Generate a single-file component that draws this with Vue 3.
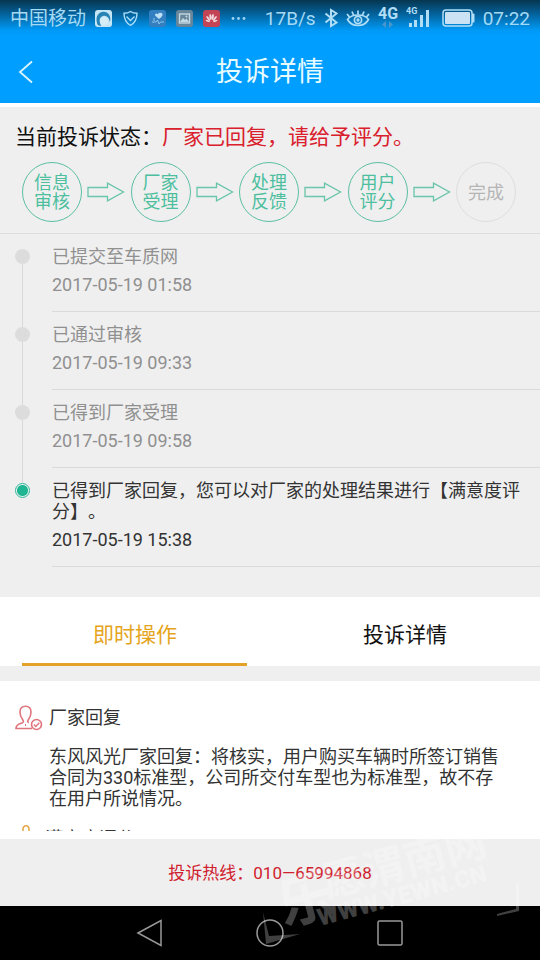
<script setup>
import { ref } from 'vue'

const steps = [
  { lines: ['信息', '审核'], done: true },
  { lines: ['厂家', '受理'], done: true },
  { lines: ['处理', '反馈'], done: true },
  { lines: ['用户', '评分'], done: true },
  { lines: ['完成'], done: false },
]

const records = [
  { text: '已提交至车质网', time: '2017-05-19 01:58' },
  { text: '已通过审核', time: '2017-05-19 09:33' },
  { text: '已得到厂家受理', time: '2017-05-19 09:58' },
  { text: '已得到厂家回复，您可以对厂家的处理结果进行【满意度评分】。', time: '2017-05-19 15:38' },
]

const tabs = ['即时操作', '投诉详情']
const active = ref(0)
</script>

<template>
  <div class="screen" lang="zh-CN">
    <header class="top">
      <div class="status-bar">
        <span class="carrier">中国移动</span>
        <div class="notices">
          <svg width="17" height="17" viewBox="0 0 17 17">
            <rect width="17" height="17" rx="3" fill="#c5e6f5" />
            <path d="M2 13C0 5 5 1 10 2c5 1 6 6 5 10-1-5-4-7-7-6-3 1-4 4-3 7l1 3C4 16 2 15 2 13z" fill="#2583b5" />
            <circle cx="9" cy="11" r="4" fill="#d5edf7" />
          </svg>
          <svg width="17" height="17" viewBox="0 0 17 17" fill="none" stroke="#a9dcfa" stroke-width="1.4">
            <path d="M8.500 1.500C6.500 3 4.500 3.300 2 3.300c0 6 1.500 9.500 6.500 12 5-2.500 6.500-6 6.500-12-2.500 0-4.500-.3-6.500-1.800z" />
            <path d="M4.500 6.500l4 4 4-4" />
          </svg>
          <svg width="17" height="17" viewBox="0 0 17 17">
            <rect width="17" height="17" rx="3" fill="#347fc0" />
            <path d="M10 9L6.500 6C5 4 7.500 2.500 9 4.300c1-2.300 5-1.800 4.500.7-.3 1.500-1.500 2.500-3.500 4z" fill="#bde0f5" />
            <path d="M3 12h4l1.500-2 1.500 4 1.500-2H15M5 8v3" stroke="#8dc5ea" fill="none" />
          </svg>
          <svg width="17" height="17" viewBox="0 0 17 17">
            <rect width="17" height="17" rx="3" fill="#68869a" />
            <rect x="3.500" y="4" width="10" height="9" fill="none" stroke="#c2d8e2" stroke-width="1.400" />
            <path d="M4 12l3-4 2 2 1.500-1.500L13 12z" fill="#c2d8e2" />
            <circle cx="10.500" cy="6.500" r="1" fill="#c2d8e2" />
          </svg>
          <svg width="17" height="17" viewBox="0 0 17 17">
            <rect width="17" height="17" rx="3" fill="#c34455" />
            <g fill="#f3dce0">
              <ellipse cx="7.500" cy="7" rx="1.100" ry="3" transform="rotate(-8 7.500 7)" />
              <ellipse cx="9.700" cy="7" rx="1.100" ry="3" transform="rotate(8 9.700 7)" />
              <ellipse cx="5.300" cy="8.500" rx="1" ry="3" transform="rotate(-38 5.300 8.500)" />
              <ellipse cx="11.800" cy="8.500" rx="1" ry="3" transform="rotate(38 11.800 8.500)" />
              <ellipse cx="4.700" cy="11" rx=".9" ry="2.200" transform="rotate(-72 4.700 11)" />
              <ellipse cx="12.300" cy="11" rx=".9" ry="2.200" transform="rotate(72 12.300 11)" />
            </g>
          </svg>
          <svg width="17" height="17" viewBox="0 0 17 17" fill="#9bd2f0">
            <circle cx="3" cy="8.500" r="1.400" /><circle cx="8.500" cy="8.500" r="1.400" /><circle cx="14" cy="8.500" r="1.400" />
          </svg>
        </div>
        <div class="signals">
          <span class="speed">17B/s</span>
          <svg width="14" height="20" viewBox="0 0 14 20" fill="none" stroke="#b0def7" stroke-width="2">
            <path d="M1.500 5.500l11 9L7 18v-16l5.500 3.500-11 9" />
          </svg>
          <svg width="24" height="20" viewBox="0 0 24 20" fill="none" stroke="#b0def7" stroke-width="1.700">
            <path d="M1.500 11.500C6 5.500 18 5.500 22.500 11.500 18 19.500 6 19.500 1.500 11.500z" />
            <circle cx="12" cy="12" r="3.600" /><circle cx="12" cy="12" r=".8" />
            <path d="M12 6.500V2.500M7.500 7L6 3.500M16.500 7L18 3.500M3.500 9L1 6M20.500 9L23 6" />
          </svg>
          <svg width="20" height="26" viewBox="0 0 20 26">
            <text x="0" y="14" class="net">4G</text>
            <path d="M4 19.500l4-3.500v7zM15 19.500L11 16v7z" fill="#4796cc" />
          </svg>
          <svg width="24" height="26" viewBox="0 0 24 26" fill="#b0def7">
            <text x="0" y="9" class="net-small">4G</text>
            <rect x="3" y="18" width="3" height="4" /><rect x="8" y="15" width="3" height="7" />
            <rect x="14" y="10" width="3" height="12" /><rect x="20" y="5" width="3" height="17" />
          </svg>
          <svg class="battery" width="33" height="18" viewBox="0 0 33 18">
            <rect x="1" y="1" width="29" height="16" rx="3" fill="none" stroke="#b0def7" stroke-width="1.500" />
            <rect x="3" y="3" width="25" height="12" rx="1" fill="#cbe2f5" />
            <path d="M30 4.500h1.500q1 0 1 1v7q0 1-1 1H30z" fill="#b0def7" />
          </svg>
          <span class="clock">07:22</span>
        </div>
      </div>
      <div class="title-bar">
        <button class="back" type="button" aria-label="返回">
          <svg width="16" height="24" viewBox="0 0 16 24" fill="none" stroke="#d8f5ff" stroke-width="1.800">
            <path d="M14 1.500L2 12l12 10.500" />
          </svg>
        </button>
        <h1>投诉详情</h1>
      </div>
    </header>

    <section class="progress">
      <p class="state">当前投诉状态：<strong>厂家已回复，请给予评分。</strong></p>
      <div class="steps">
        <template v-for="(step, i) in steps" :key="i">
          <svg v-if="i" width="38" height="20" viewBox="0 0 38 20" fill="none" stroke="#69c5ab" stroke-width="1.300">
            <path d="M1 5.500h19.500V1.200L36.500 10 20.500 18.800v-4.300H1z" />
          </svg>
          <div class="step" :class="{ pending: !step.done }">
            <span v-for="line in step.lines" :key="line">{{ line }}</span>
          </div>
        </template>
      </div>
    </section>

    <ol class="timeline">
      <li v-for="(record, i) in records" :key="record.time" :class="{ current: i === records.length - 1 }">
        <span class="rail"><i class="dot"></i></span>
        <div class="record">
          <p>{{ record.text }}</p>
          <time>{{ record.time }}</time>
        </div>
      </li>
    </ol>

    <nav class="tabs">
      <button v-for="(tab, i) in tabs" :key="tab" type="button" :class="{ active: active === i }" @click="active = i">
        {{ tab }}
      </button>
    </nav>

    <main class="panel">
      <div class="scroll">
        <article>
          <h2>
            <svg width="28" height="26" viewBox="0 0 28 26" fill="none" stroke="#e0737c" stroke-width="1.600">
              <path d="M17 23.500H1c0-4 3-4.500 6-5.500 1.800-.7 1.700-2.200.6-3.500C5.500 12 5 9.500 5 7c0-3.500 2.200-5.800 5.500-5.800S16 3.500 16 7c0 2.500-.5 5-2.500 7.500-1.200 1.500-1 2.600.3 3.300" />
              <path d="M10.500 19v2" stroke-width="1" />
              <circle cx="21.500" cy="19.500" r="5" />
              <path d="M18.800 19.500l2 2 3.500-3.700" stroke-width="1.400" />
            </svg>
            厂家回复
          </h2>
          <p>东风风光厂家回复：将核实，用户购买车辆时所签订销售合同为330标准型，公司所交付车型也为标准型，故不存在用户所说情况。</p>
        </article>
        <article>
          <h2 class="rating">
            <svg width="24" height="30" viewBox="0 0 24 30" fill="none" stroke="#e8a84c" stroke-width="1.600">
              <path d="M8 12V5.500C8 .5 14 .5 14 5.500V12h7l-2 16H6L4 14z" />
            </svg>
            满意度评分
          </h2>
        </article>
      </div>
    </main>

    <footer class="hotline"><a href="tel:01065994868">投诉热线：010—65994868</a></footer>

    <div class="system-nav">
      <button type="button" aria-label="后退">
        <svg width="28" height="28" viewBox="0 0 28 28"><path d="M2 14L25 1.500v25z" /></svg>
      </button>
      <button type="button" aria-label="主屏幕">
        <svg width="28" height="28" viewBox="0 0 28 28"><circle cx="14" cy="14" r="13" /></svg>
      </button>
      <button type="button" aria-label="最近任务">
        <svg width="28" height="28" viewBox="0 0 28 28"><rect x="2" y="2" width="24" height="24" rx="1.500" /></svg>
      </button>
    </div>

    <svg class="watermark" width="290" height="150" viewBox="0 -20 290 150" aria-hidden="true">
      <text transform="translate(34 96) rotate(-15)" class="mark-name"><tspan class="mark-initial">乐</tspan></text>
      <text transform="translate(77 68) rotate(-15)" class="mark-name">愿渭南网</text>
      <text transform="translate(70 96) rotate(-15)" class="mark-site">WWW.YEWN.CN</text>
      <path d="M13 82l6 24 31-2-34 10zM269 54v27l-22 5v-2l19-5V54z" />
    </svg>
  </div>
</template>

<style>
body {
  margin: 0;
  background: #efefef;
}
</style>

<style scoped>
.screen {
  position: relative;
  display: flex;
  flex-direction: column;
  height: 100vh;
  overflow: hidden;
  background: #efefef;
  color: #333;
  font-family: Roboto, "Noto Sans CJK SC", sans-serif;
  font-size: 18px;
  line-height: 21px;
  text-spacing-trim: space-all;
}
h1, h2, p, ol {
  margin: 0;
  padding: 0;
  font-weight: 400;
}
button {
  padding: 0;
  border: 0;
  background: none;
  color: inherit;
  font: inherit;
  cursor: pointer;
}
svg {
  display: block;
  flex: none;
}
.top {
  flex: none;
  border-bottom: 4px solid #fff;
  background: linear-gradient(#063650 0, #04629b 14px, #0099f5 30px, #009eff 36px);
}
.status-bar {
  display: flex;
  align-items: center;
  height: 36px;
  padding: 0 10px;
  color: #a5daf5;
  font-size: 19px;
}
.notices {
  display: flex;
  gap: 10px;
  margin-left: 9px;
}
.signals {
  display: flex;
  align-items: center;
  gap: 8px;
  margin-left: auto;
}
.battery {
  margin-left: 4px;
}
.net {
  fill: #b0def7;
  font-size: 16px;
  font-weight: 700;
}
.net-small {
  font-size: 9px;
  font-weight: 700;
}
.title-bar {
  display: grid;
  grid-template-columns: 52px 1fr 52px;
  align-items: center;
  box-sizing: border-box;
  height: 67px;
  padding-top: 4px;
  color: #e8fbff;
}
.back {
  display: flex;
  padding-left: 18px;
}
h1 {
  font-size: 27px;
  line-height: 40px;
  text-align: center;
}
.progress {
  flex: none;
  padding: 17px 0 11px;
  border-bottom: 1px solid #ddd;
}
.state {
  padding: 0 15px;
  color: #111;
  font-size: 21px;
  line-height: 26px;
}
.state strong {
  color: #d9202c;
  font-weight: 400;
}
.steps {
  display: flex;
  align-items: center;
  justify-content: space-between;
  padding: 12px 24px 0 22px;
}
.step {
  display: flex;
  flex-direction: column;
  align-items: center;
  justify-content: center;
  box-sizing: border-box;
  width: 60px;
  height: 60px;
  border: 1px solid #5bbfa3;
  border-radius: 50%;
  color: #4dbf9f;
  line-height: 19px;
}
.step.pending {
  border-color: #dedede;
  color: #b5b5b5;
}
.timeline {
  flex: none;
  padding-bottom: 30px;
  list-style: none;
}
.timeline li {
  display: flex;
  color: #909090;
}
.rail {
  display: flex;
  flex: none;
  justify-content: center;
  width: 14px;
  padding: 15px 23px 0 15px;
  background: linear-gradient(#d9d9d9, #d9d9d9) 22px 0 / 1px 100% no-repeat;
}
li:first-child .rail {
  background-position: 22px 22px;
}
.current .rail {
  background-size: 1px 15px;
}
.dot {
  flex: none;
  box-sizing: border-box;
  width: 15px;
  height: 15px;
  border-radius: 50%;
  background: #dcdcdc;
}
.current .dot {
  border: 1px solid #2bb99a;
  background: radial-gradient(circle, #1db592 5px, #efefef 6px);
}
.record {
  flex: 1;
  padding: 12px 16px 16px 0;
  border-bottom: 1px solid #dadada;
}
.timeline .current {
  color: #333;
}
time {
  display: block;
  margin-top: 7px;
}
.tabs {
  display: flex;
  flex: none;
  background: #fff;
}
.tabs button {
  position: relative;
  flex: 1;
  height: 69px;
  padding-top: 8px;
  color: #111;
  font-size: 21px;
}
.tabs .active {
  color: #e5a41c;
}
.tabs .active::after {
  content: "";
  position: absolute;
  right: 23px;
  bottom: 0;
  left: 22px;
  height: 3px;
  background: #e3a328;
}
.panel {
  display: flex;
  flex: 1;
  min-height: 0;
  margin-top: 15px;
  padding-bottom: 8px;
  background: #fff;
}
.scroll {
  flex: 1;
  overflow-y: auto;
  padding-top: 26px;
  scrollbar-width: none;
}
article {
  padding: 0 32px 19px 15px;
}
h2 {
  display: flex;
  align-items: center;
  gap: 6px;
  height: 21px;
  font-size: 18px;
}
article p {
  margin-top: 18px;
  padding-left: 34px;
}
.hotline {
  display: flex;
  flex: none;
  align-items: center;
  justify-content: center;
  box-sizing: border-box;
  height: 67px;
  padding-top: 2px;
  font-size: 17px;
}
.hotline a {
  color: #d0202d;
  text-decoration: none;
}
.system-nav {
  display: flex;
  flex: none;
  align-items: center;
  justify-content: center;
  gap: 92px;
  height: 54px;
  background: #000;
}
.system-nav svg {
  fill: none;
  stroke: #999;
  stroke-width: 1.5;
}
.watermark {
  position: absolute;
  right: 0;
  bottom: 0;
  fill: #fff;
  opacity: 0.25;
  pointer-events: none;
}
.mark-name {
  font-size: 42px;
  font-weight: 700;
}
.mark-initial {
  font-size: 56px;
}
.mark-site {
  font-size: 24px;
  font-weight: 900;
}
</style>
